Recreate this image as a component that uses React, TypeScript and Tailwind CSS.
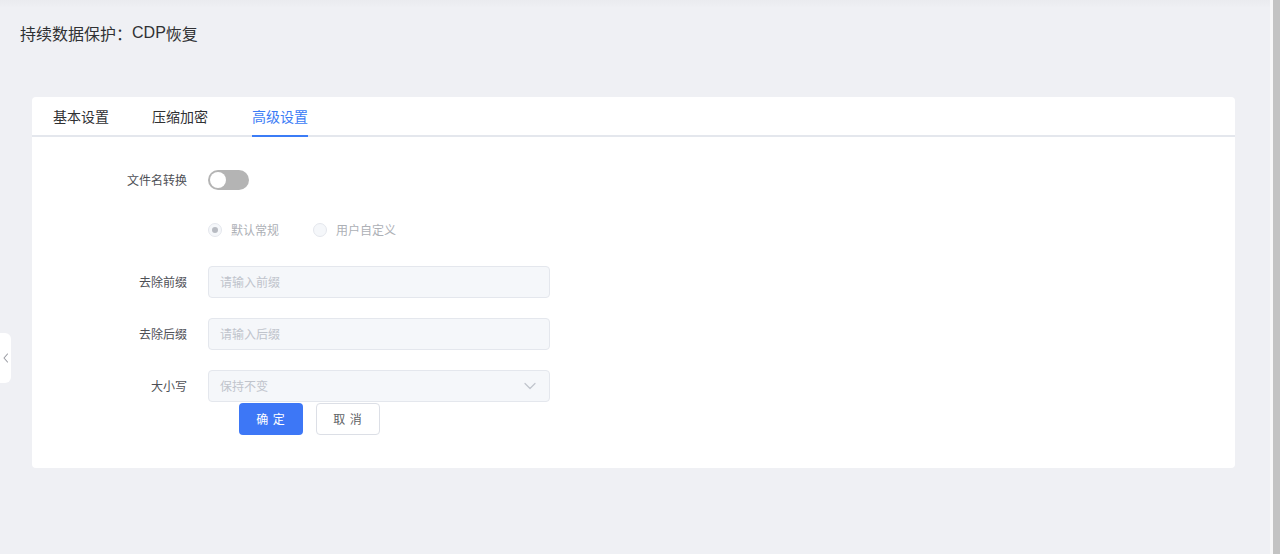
import React from "react";

const font = { fontFamily: '"Noto Sans CJK SC", "Noto Sans", sans-serif' };

function FormRow({ label, children }: { label?: string; children: React.ReactNode }) {
  return (
    <div className="flex h-8 items-center">
      <div className="w-[155px] shrink-0 pr-0 text-right text-[12px] leading-none text-[#4e5056]">{label}</div>
      <div className="ml-[21px] flex items-center">{children}</div>
    </div>
  );
}

function TextInput({ placeholder }: { placeholder: string }) {
  return (
    <div className="flex h-8 w-[342px] items-center rounded-[4px] border border-[#e4e7ed] bg-[#f5f7fa] px-[11px] text-[12px] text-[#c0c4cc]">
      {placeholder}
    </div>
  );
}

export default function App() {
  return (
    <div className="flex h-[554px] w-[1280px] overflow-hidden bg-[#eff0f4]" style={font}>
      <div className="relative flex-1">
        <div className="h-2 bg-gradient-to-b from-[#eaebef] to-[#eff0f4]" />
        <div className="mt-[13px] flex h-6 items-center overflow-hidden pl-5 text-[16px] leading-6 text-[#303133]">
          <span>持续数据保护：</span>
          <span style={{ fontFamily: '"Liberation Sans", Arial, sans-serif' }}>CDP</span>
          <span>恢复</span>
        </div>
        <div className="ml-8 mr-[35px] mt-[52px] rounded-[4px] bg-white">
          <div className="relative flex h-10 items-center border-b-2 border-[#e4e7ed] pl-[21px] text-[14px] text-[#303133]">
            <div className="mr-[43px] leading-none">基本设置</div>
            <div className="mr-[44px] leading-none">压缩加密</div>
            <div className="relative flex h-full items-center leading-none text-[#3b7cf6]">
              高级设置
              <div className="absolute bottom-[-2px] left-0 right-0 h-[2px] bg-[#3b7cf6]" />
            </div>
          </div>
          <div className="flex flex-col pb-[33px] pt-[27px]">
            <FormRow label="文件名转换">
              <div className="flex h-5 w-[41px] items-center rounded-full bg-[#b4b4b4] px-[2px]">
                <div className="h-4 w-4 rounded-full bg-white" />
              </div>
            </FormRow>
            <div className="mt-[18px]">
              <FormRow>
                <div className="flex items-center text-[12px] text-[#adb0b6]">
                  <div className="flex h-[14px] w-[14px] items-center justify-center rounded-full border border-[#e4e7ed] bg-[#f5f7fa]">
                    <div className="h-[6px] w-[6px] rounded-full bg-[#b8bbc2]" />
                  </div>
                  <span className="ml-[9px] leading-none">默认常规</span>
                  <div className="ml-[34px] h-[14px] w-[14px] rounded-full border border-[#e4e7ed] bg-[#f5f7fa]" />
                  <span className="ml-[9px] leading-none">用户自定义</span>
                </div>
              </FormRow>
            </div>
            <div className="mt-5">
              <FormRow label="去除前缀">
                <TextInput placeholder="请输入前缀" />
              </FormRow>
            </div>
            <div className="mt-5">
              <FormRow label="去除后缀">
                <TextInput placeholder="请输入后缀" />
              </FormRow>
            </div>
            <div className="mt-5">
              <FormRow label="大小写">
                <div className="flex h-8 w-[342px] items-center justify-between rounded-[4px] border border-[#e4e7ed] bg-[#f5f7fa] pl-[11px] pr-[13px] text-[12px] text-[#c0c4cc]">
                  <span>保持不变</span>
                  <svg width="12" height="8" viewBox="0 0 12 8" fill="none">
                    <path d="M1 1.5L6 6.5L11 1.5" stroke="#c0c4cc" strokeWidth="1.2" strokeLinecap="round" strokeLinejoin="round" />
                  </svg>
                </div>
              </FormRow>
            </div>
            <div className="ml-[207px] mt-px flex items-center gap-[13px] text-[12px]">
              <button className="flex h-8 w-16 items-center justify-center rounded-[4px] bg-[#3d77f6] tracking-[1px] text-white">确 定</button>
              <button className="flex h-8 w-16 items-center justify-center rounded-[4px] border border-[#dcdfe6] bg-white tracking-[1px] text-[#606266]">取 消</button>
            </div>
          </div>
        </div>
        <div className="absolute left-0 top-[333px] flex h-[50px] w-[11px] items-center justify-center rounded-r-[6px] bg-white">
          <svg width="6" height="10" viewBox="0 0 6 10" fill="none">
            <path d="M4.5 1L1 5L4.5 9" stroke="#9a9ca3" strokeWidth="1.1" strokeLinecap="round" strokeLinejoin="round" />
          </svg>
        </div>
      </div>
      <div className="w-[3px] bg-[#f7f7f8]" />
      <div className="w-[7px] bg-[#c3c3c3]" />
    </div>
  );
}
